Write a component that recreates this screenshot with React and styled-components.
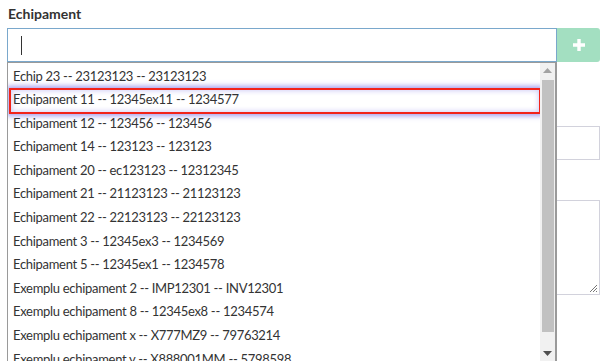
import React from 'react';
import styled, { createGlobalStyle } from 'styled-components';

const GlobalStyle = createGlobalStyle`
  html, body {
    margin: 0;
    padding: 0;
    background: #ffffff;
  }
  body {
    font-family: Lato, "Noto Sans", sans-serif;
    color: #333333;
    overflow: hidden;
  }
`;

const Page = styled.div`
  width: 604px;
  height: 361px;
  padding: 4px 4px 0 7px;
  box-sizing: border-box;
  position: relative;
`;

const Label = styled.div`
  font-size: 14px;
  font-weight: 700;
  color: #333;
  height: 20px;
  line-height: 20px;
  margin: 0 0 4px 1px;
`;

const FieldRow = styled.div`
  display: grid;
  grid-template-columns: 1fr 43px;
  position: relative;
  z-index: 2;
`;

const SearchBox = styled.div`
  position: relative;
  height: 34px;
  border: 1px solid #7aa8cc;
  box-sizing: border-box;
  background: #fff;
`;

const Caret = styled.span`
  position: absolute;
  left: 13px;
  top: 7px;
  width: 1px;
  height: 19px;
  background: #333;
`;

const AddButton = styled.div`
  height: 34px;
  background: #a3dfc1;
  border-radius: 0 3px 3px 0;
  display: flex;
  align-items: center;
  justify-content: center;
`;

const Dropdown = styled.div`
  position: absolute;
  top: 33px;
  left: -1px;
  width: 550px;
  height: 300px;
  box-sizing: border-box;
  border: 1px solid #9a9a9a;
  border-right: 2px solid #9a9a9a;
  background: #fff;
  display: flex;
`;

const Options = styled.div`
  flex: 1;
  padding-top: 1.5px;
  overflow: hidden;
`;

const Option = styled.div`
  position: relative;
  height: 23.6px;
  line-height: 23.6px;
  padding-left: 5px;
  font-size: 13px;
  letter-spacing: -0.3px;
  color: #333;
  white-space: nowrap;

  ${(p) =>
    p.$active &&
    `
    &::after {
      content: '';
      position: absolute;
      left: 1px;
      right: -1px;
      top: -0.5px;
      bottom: -2.5px;
      border: 2.5px solid #f2231a;
      box-shadow: 0 0 5px 2px rgba(105, 95, 225, 0.6),
        inset 0 0 5px 1px rgba(105, 95, 225, 0.3);
    }
  `}
`;

const Scrollbar = styled.div`
  width: 15px;
  background: #f1f1f1;
  display: flex;
  flex-direction: column;
  align-items: center;
`;

const Arrow = styled.div`
  height: 15px;
  width: 15px;
  display: flex;
  align-items: center;
  justify-content: center;
`;

const Thumb = styled.div`
  width: 12px;
  height: 252px;
  margin-top: 2px;
  background: #c1c1c1;
`;

const Spacer = styled.div`
  flex: 1;
`;

const Form = styled.div`
  margin-top: 31px;
  display: flex;
  flex-direction: column;
`;

const TextInput = styled.div`
  height: 34px;
  border: 1px solid #d2d2dc;
  box-sizing: border-box;
  margin-top: 33px;
`;

const TextArea = styled.div`
  position: relative;
  height: 95px;
  border: 1px solid #d2d2dc;
  box-sizing: border-box;
  margin-top: 40px;
`;

const Grip = styled.svg`
  position: absolute;
  right: 1px;
  bottom: 1px;
`;

const items = [
  'Echip 23 -- 23123123 -- 23123123',
  'Echipament 11 -- 12345ex11 -- 1234577',
  'Echipament 12 -- 123456 -- 123456',
  'Echipament 14 -- 123123 -- 123123',
  'Echipament 20 -- ec123123 -- 12312345',
  'Echipament 21 -- 21123123 -- 21123123',
  'Echipament 22 -- 22123123 -- 22123123',
  'Echipament 3 -- 12345ex3 -- 1234569',
  'Echipament 5 -- 12345ex1 -- 1234578',
  'Exemplu echipament 2 -- IMP12301 -- INV12301',
  'Exemplu echipament 8 -- 12345ex8 -- 1234574',
  'Exemplu echipament x -- X777MZ9 -- 79763214',
  'Exemplu echipament y -- X888001MM -- 5798598',
];

export default function App() {
  return (
    <Page>
      <GlobalStyle />
      <Label>Echipament</Label>
      <FieldRow>
        <SearchBox>
          <Caret />
          <Dropdown>
            <Options>
              {items.map((t, i) => (
                <Option key={t} $active={i === 1}>{t}</Option>
              ))}
            </Options>
            <Scrollbar>
              <Arrow>
                <svg width="9" height="5" viewBox="0 0 9 5">
                  <path d="M0 5 L4.5 0 L9 5 Z" fill="#a3a3a3" />
                </svg>
              </Arrow>
              <Thumb />
              <Spacer />
              <Arrow>
                <svg width="9" height="5" viewBox="0 0 9 5">
                  <path d="M0 0 L9 0 L4.5 5 Z" fill="#505050" />
                </svg>
              </Arrow>
            </Scrollbar>
          </Dropdown>
        </SearchBox>
        <AddButton>
          <svg width="12" height="12" viewBox="0 0 12 12">
            <path d="M4.3 0h3.4v4.3H12v3.4H7.7V12H4.3V7.7H0V4.3h4.3z" fill="#fff" />
          </svg>
        </AddButton>
      </FieldRow>
      <Form>
        <TextInput />
        <TextArea>
          <Grip width="9" height="9" viewBox="0 0 9 9">
            <path d="M1 8 L8 1 M4 8 L8 4 M7 8 L8 7" stroke="#777" strokeWidth="1" />
          </Grip>
        </TextArea>
      </Form>
    </Page>
  );
}
